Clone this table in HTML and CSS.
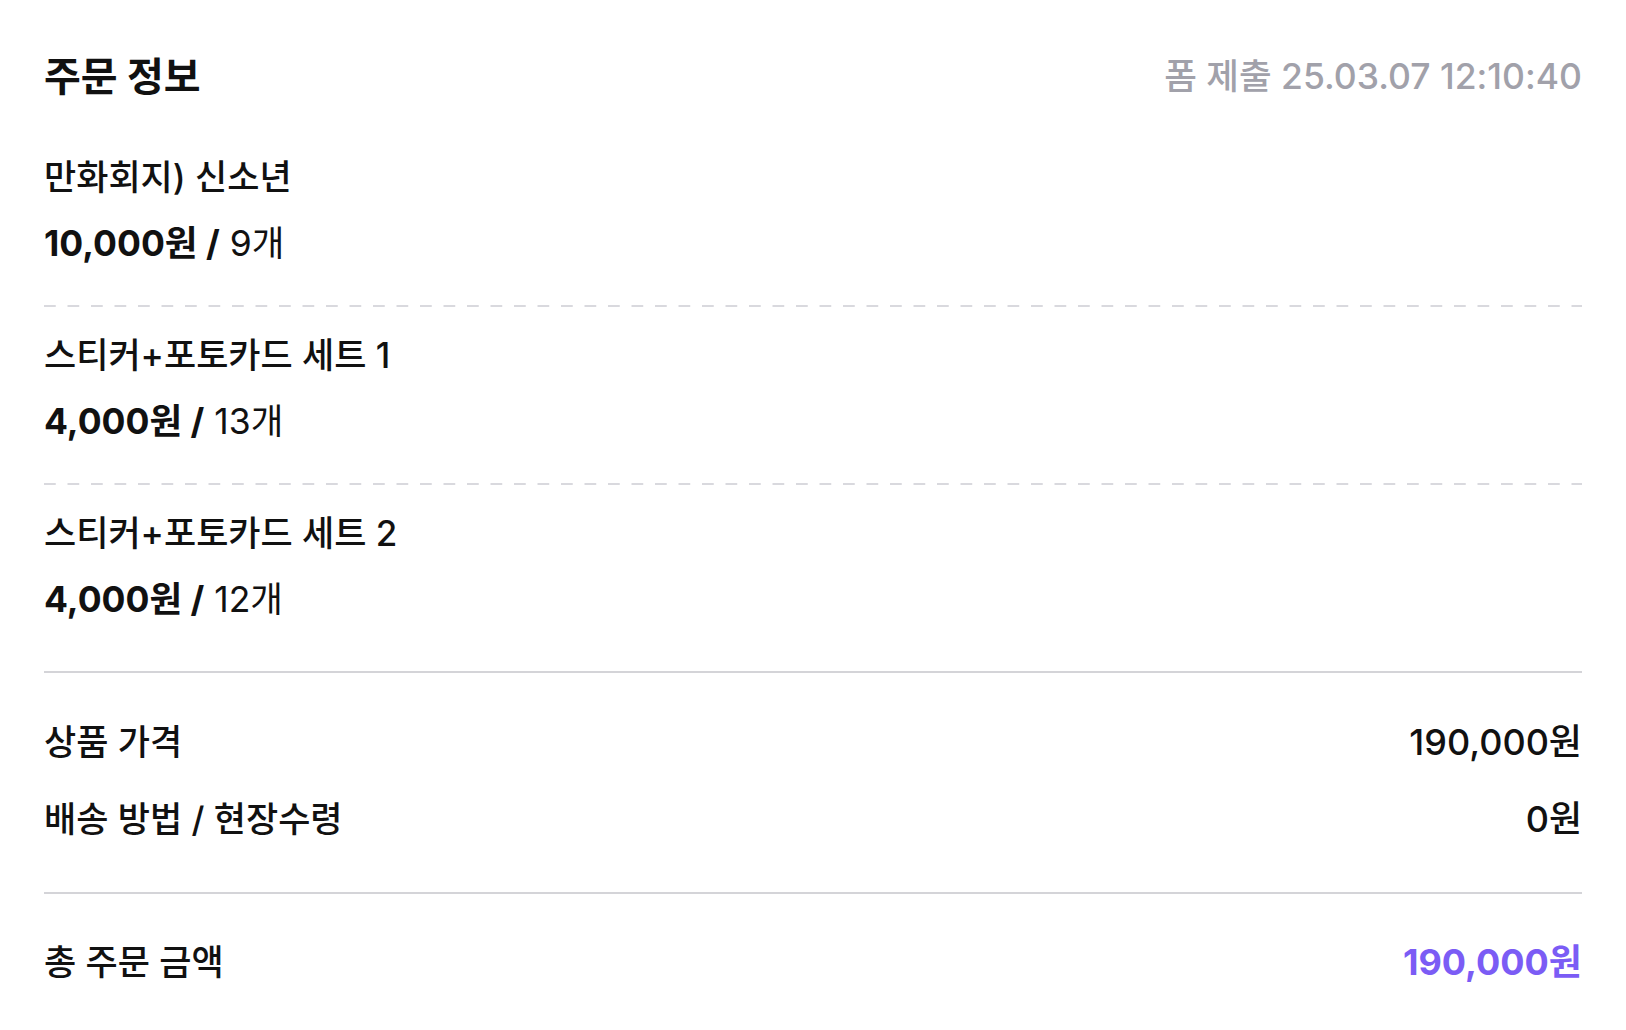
FILE: index.html
```html
<!DOCTYPE html>
<html lang="ko">
<head>
<meta charset="utf-8">
<title>주문 정보</title>
<link rel="stylesheet" href="styles.css">
</head>
<body>
<main class="page">
  <header class="header">
    <h1 class="title">주문 정보</h1>
    <span class="stamp">폼 제출 25.03.07 12:10:40</span>
  </header>

  <section class="items">
    <div class="item">
      <div class="item-name">만화회지) 신소년</div>
      <div class="item-price"><b>10,000원 /</b> 9개</div>
    </div>
    <div class="item">
      <div class="item-name">스티커+포토카드 세트 1</div>
      <div class="item-price"><b>4,000원 /</b> 13개</div>
    </div>
    <div class="item">
      <div class="item-name">스티커+포토카드 세트 2</div>
      <div class="item-price"><b>4,000원 /</b> 12개</div>
    </div>
  </section>

  <section class="summary">
    <div class="row"><span>상품 가격</span><span class="value">190,000원</span></div>
    <div class="row"><span>배송 방법 / 현장수령</span><span class="value">0원</span></div>
  </section>

  <section class="total">
    <div class="row"><span>총 주문 금액</span><span class="total-value">190,000원</span></div>
  </section>
</main>
</body>
</html>
```

FILE: styles.css
```css
* { box-sizing: border-box; margin: 0; padding: 0; }

body {
  background: #ffffff;
  font-family: "Inter", "Noto Sans CJK KR", sans-serif;
  color: #111111;
}

.page {
  padding: 51px 44px 0 44px;
}

.header {
  display: flex;
  justify-content: space-between;
  align-items: center;
  height: 52px;
  margin-bottom: 25px;
}

.title {
  font-size: 40px;
  font-weight: 700;
  line-height: 52px;
}

.stamp {
  font-size: 35.5px;
  font-weight: 500;
  color: #a1a1aa;
  line-height: 52px;
}

.item {
  display: flex;
  flex-direction: column;
  gap: 21px;
  padding: 26px 0 38px;
  font-size: 35px;
  line-height: 46px;
}

.item + .item {
  background-image: linear-gradient(to right, #d9d9de 12px, transparent 12px);
  background-size: 23.5px 2px;
  background-repeat: repeat-x;
  background-position: 0 0;
  padding-top: 27px;
}

.items .item:last-child {
  padding-bottom: 48px;
}

.item-name { font-weight: 500; }

.item-price { font-weight: 400; font-size: 35.5px; }
.item-price b { font-weight: 700; }

.summary {
  border-top: 2px solid #d4d4d8;
  border-bottom: 2px solid #d4d4d8;
  padding: 46px 0 50px;
  display: flex;
  flex-direction: column;
  gap: 31px;
}

.row {
  display: flex;
  justify-content: space-between;
  align-items: center;
  font-size: 35px;
  line-height: 46px;
  font-weight: 500;
}

.value {
  font-size: 36px;
}

.total {
  padding-top: 45px;
}

.total-value {
  font-size: 36px;
  color: #7b5cf5;
  font-weight: 700;
}
```
